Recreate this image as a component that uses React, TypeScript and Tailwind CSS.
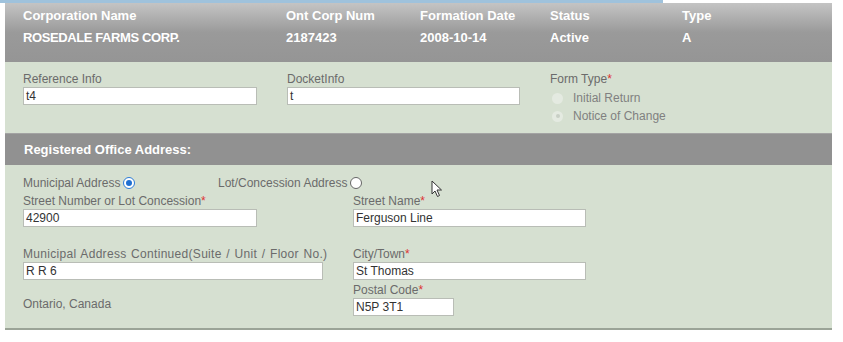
import React from 'react';

const font = { fontFamily: '"Liberation Sans", Arial, sans-serif' };

function Req() {
    return <span className="text-[#d33]">*</span>;
}

function Field({ label, value, width, req, wide }: { label: string; value: string; width: string; req?: boolean; wide?: boolean }) {
    return (
        <div className="flex flex-col">
            <div className={`text-[12px] leading-[14px] text-[#6b6b6b] ${wide ? 'tracking-[0.3px] [word-spacing:1px]' : ''}`}>
                {label}
                {req && <Req />}
            </div>
            <div className={`${width} h-[18px] mt-[1px] bg-white border border-[#b9bdb6] px-[2px] text-[12px] leading-[16px] text-[#333]`}>
                {value}
            </div>
        </div>
    );
}

function Radio({ checked, faded }: { checked?: boolean; faded?: boolean }) {
    if (faded) {
        return (
            <span className="inline-flex w-[11px] h-[11px] rounded-full bg-[#e4eae1] items-center justify-center">
                {checked && <span className="w-[4px] h-[4px] rounded-full bg-[#c8cfc5]" />}
            </span>
        );
    }
    return (
        <span
            className={`inline-flex w-[12px] h-[12px] rounded-full bg-white border items-center justify-center ${checked ? 'border-[#2b7bd6]' : 'border-[#666]'}`}
        >
            {checked && <span className="w-[6px] h-[6px] rounded-full bg-[#1f6fd1]" />}
        </span>
    );
}

export default function App() {
    return (
        <div className="relative w-[843px] h-[342px] bg-white overflow-hidden" style={font}>
            <div className="h-[3px] w-[663px] bg-[#9fc2dc]" />
            <div className="ml-[5px] w-[827px]">
                {/* corporation header */}
                <div className="h-[59px] bg-gradient-to-b from-[#c4c4c4] via-[#9a9a9a] to-[#959595] pt-[2px] pl-[18px] text-white font-bold text-[13px] leading-[22px]">
                    <div className="grid grid-cols-[263px_134px_130px_132px_1fr]">
                        <div>Corporation Name</div>
                        <div>Ont Corp Num</div>
                        <div>Formation Date</div>
                        <div>Status</div>
                        <div>Type</div>
                        <div className="tracking-[-0.4px]">ROSEDALE FARMS CORP.</div>
                        <div>2187423</div>
                        <div>2008-10-14</div>
                        <div>Active</div>
                        <div>A</div>
                    </div>
                </div>

                {/* reference row */}
                <div className="h-[71px] bg-[#d6e0d1] pt-[10px] pl-[18px] flex">
                    <div className="w-[264px]">
                        <Field label="Reference Info" value="t4" width="w-[234px]" />
                    </div>
                    <div className="w-[263px]">
                        <Field label="DocketInfo" value="t" width="w-[233px]" />
                    </div>
                    <div className="text-[12px] leading-[18px] text-[#6b6b6b]">
                        <div className="leading-[14px] mb-[3px]">
                            Form Type<Req />
                        </div>
                        <div className="flex items-center gap-[10px] pl-[2px] text-[#808080]">
                            <Radio faded />
                            <span>Initial Return</span>
                        </div>
                        <div className="flex items-center gap-[10px] pl-[2px] text-[#808080]">
                            <Radio faded checked />
                            <span>Notice of Change</span>
                        </div>
                    </div>
                </div>

                <div className="h-[32px] bg-[#919191] border-t border-[#a3a3a3] pl-[19px] flex items-center text-white font-bold text-[13px]">
                    Registered Office Address:
                </div>

                {/* address */}
                <div className="h-[165px] bg-[#d6e0d1] border-b-2 border-[#9ba497] pt-[11px] pl-[18px] text-[12px]">
                    <div className="flex items-center h-[14px] text-[#6b6b6b]">
                        <span className="w-[195px] flex items-center gap-[3px]">
                            Municipal Address <Radio checked />
                        </span>
                        <span className="flex items-center gap-[3px]">
                            Lot/Concession Address <Radio />
                        </span>
                    </div>
                    <div className="flex mt-[4px]">
                        <div className="w-[330px]">
                            <Field label="Street Number or Lot Concession" req value="42900" width="w-[234px]" />
                        </div>
                        <Field label="Street Name" req value="Ferguson Line" width="w-[233px]" />
                    </div>
                    <div className="flex mt-[20px]">
                        <div className="w-[330px]">
                            <Field label="Municipal Address Continued(Suite / Unit / Floor No.)" wide value="R R 6" width="w-[300px]" />
                        </div>
                        <Field label="City/Town" req value="St Thomas" width="w-[233px]" />
                    </div>
                    <div className="flex mt-[3px]">
                        <div className="w-[330px] pt-[12px] text-[#6b6b6b]">Ontario, Canada</div>
                        <Field label="Postal Code" req value="N5P 3T1" width="w-[101px]" />
                    </div>
                </div>
            </div>

            {/* mouse pointer */}
            <svg className="absolute left-[431px] top-[180px]" width="12" height="18" viewBox="0 0 12 18">
                <path d="M1 1 L1 14 L4 11 L6.5 16.5 L8.5 15.5 L6 10 L10.5 10 Z" fill="white" stroke="#333" strokeWidth="1" strokeLinejoin="round" />
            </svg>
        </div>
    );
}
